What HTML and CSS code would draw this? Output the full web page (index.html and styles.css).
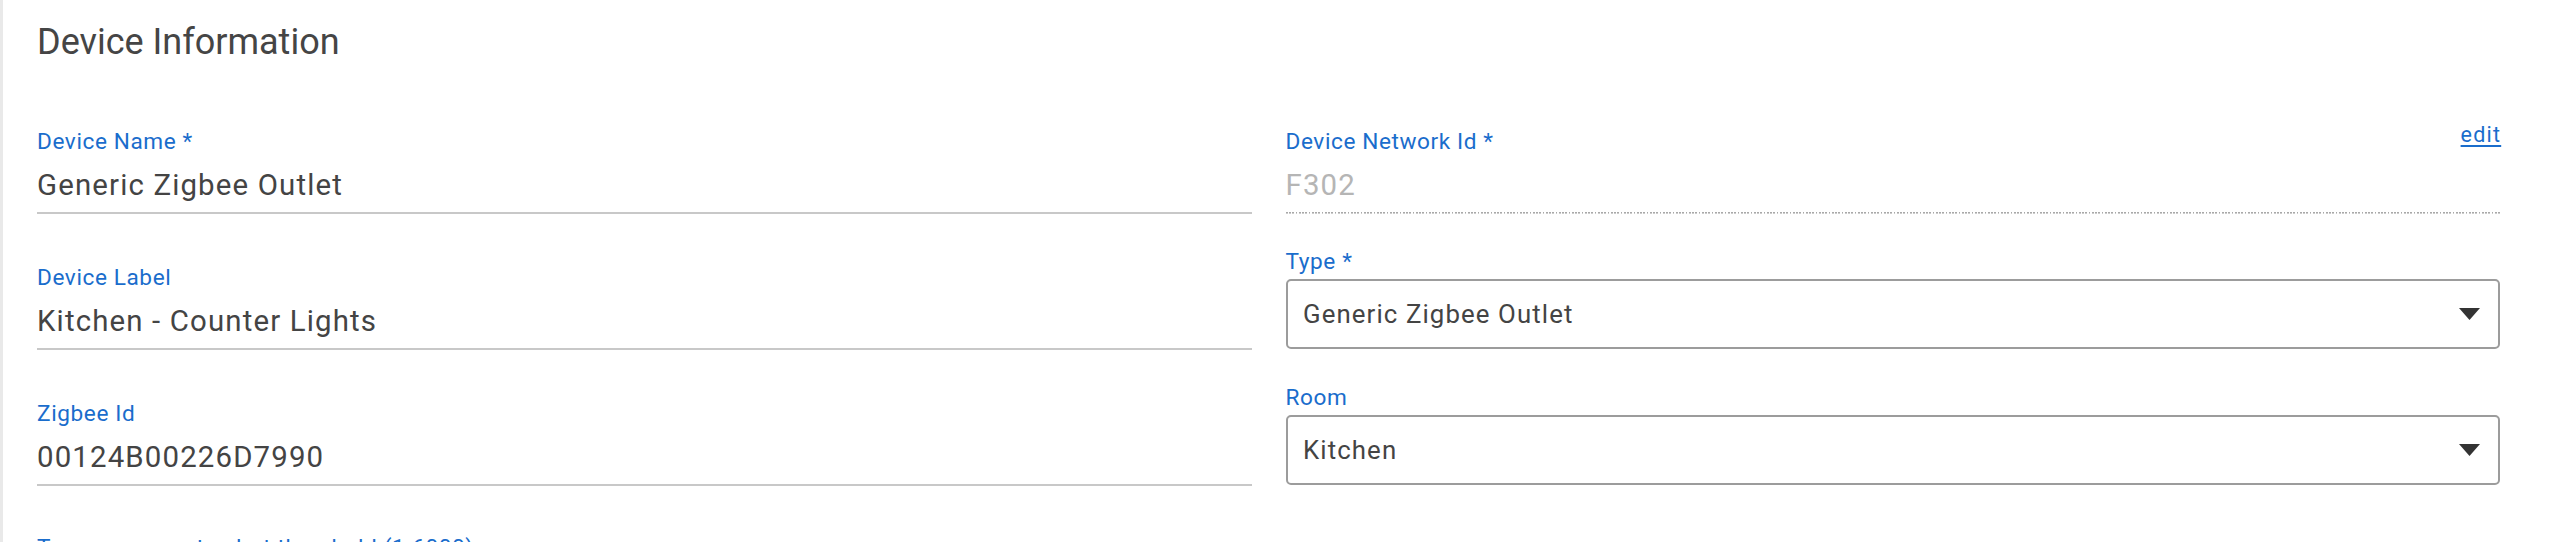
FILE: index.html
```html
<!DOCTYPE html>
<html lang="en">
<head>
<meta charset="utf-8">
<title>Device Information</title>
<link rel="stylesheet" href="styles.css">
</head>
<body>
<div class="page">
  <section class="card">
    <h2 class="title">Device Information</h2>
    <div class="grid">
      <div class="field">
        <div class="lbl-row"><label class="lbl">Device Name *</label></div>
        <div class="value">Generic Zigbee Outlet</div>
      </div>
      <div class="field">
        <div class="lbl-row"><label class="lbl">Device Network Id *</label><a class="edit" href="#">edit</a></div>
        <div class="value disabled">F302</div>
      </div>
      <div class="field">
        <div class="lbl-row"><label class="lbl">Device Label</label></div>
        <div class="value">Kitchen - Counter Lights</div>
      </div>
      <div class="field select-field">
        <div class="lbl-row"><label class="lbl">Type *</label></div>
        <div class="select">
          <span class="select-text">Generic Zigbee Outlet</span>
          <svg class="arrow" width="21" height="12" viewBox="0 0 21 12"><polygon points="0,0 21,0 10.5,12"/></svg>
        </div>
      </div>
      <div class="field">
        <div class="lbl-row"><label class="lbl">Zigbee Id</label></div>
        <div class="value">00124B00226D7990</div>
      </div>
      <div class="field select-field">
        <div class="lbl-row"><label class="lbl">Room</label></div>
        <div class="select">
          <span class="select-text">Kitchen</span>
          <svg class="arrow" width="21" height="12" viewBox="0 0 21 12"><polygon points="0,0 21,0 10.5,12"/></svg>
        </div>
      </div>
      <div class="field partial">
        <div class="lbl-row"><label class="lbl">Too many events alert threshold (1-6000)</label></div>
        <div class="value">1000</div>
      </div>
    </div>
  </section>
</div>
</body>
</html>
```

FILE: styles.css
```css
html, body {
  margin: 0;
  padding: 0;
  background: #e9e9e9;
  font-family: Roboto, "Liberation Sans", Arial, sans-serif;
}

.page {
  height: 542px;
  overflow: hidden;
  padding-left: 3px;
}

.card {
  background: #ffffff;
  height: 100%;
  padding: 21px 52px 0 34px;
  box-sizing: border-box;
}

.title {
  margin: 0 0 15px 0;
  font-size: 36px;
  line-height: 42px;
  font-weight: 400;
  color: #454545;
}

.grid {
  display: grid;
  grid-template-columns: 1fr 1fr;
  column-gap: 34px;
  grid-auto-rows: 136px;
  align-items: end;
}

.field {
  display: flex;
  flex-direction: column;
}

.lbl-row {
  display: flex;
  justify-content: space-between;
  align-items: flex-end;
}

.lbl {
  font-size: 22.6px;
  line-height: 27px;
  letter-spacing: 0.6px;
  color: #1a6dcc;
  white-space: nowrap;
}

.edit {
  font-size: 21.5px;
  line-height: 24px;
  letter-spacing: 1.2px;
  margin-right: -1.2px;
  color: #1a6dcc;
  text-decoration: underline;
  text-underline-offset: 3px;
  margin-bottom: 8px;
}

.value {
  margin-top: 13px;
  font-size: 29.4px;
  line-height: 35px;
  letter-spacing: 1.15px;
  color: #444444;
  padding-bottom: 9px;
  border-bottom: 2px solid #c8c8c8;
}

.value.disabled {
  color: #b5b5b5;
  border-bottom: none;
  padding-bottom: 11px;
  background: repeating-linear-gradient(90deg, #a9a9a9 0 1.6px, transparent 1.6px 3.25px) left bottom / 100% 1.6px no-repeat;
}

.select-field {
  margin-bottom: 1px;
}

.select {
  margin-top: 4px;
  height: 70px;
  box-sizing: border-box;
  border: 2px solid #9c9c9c;
  border-radius: 5px;
  display: flex;
  align-items: center;
  justify-content: space-between;
  padding: 0 18px 0 15.5px;
}

.select-text {
  font-size: 25.8px;
  line-height: 32px;
  letter-spacing: 1.1px;
  color: #444444;
}

.arrow {
  display: block;
  fill: #333333;
}

.partial {
  margin-bottom: 2px;
}
```
